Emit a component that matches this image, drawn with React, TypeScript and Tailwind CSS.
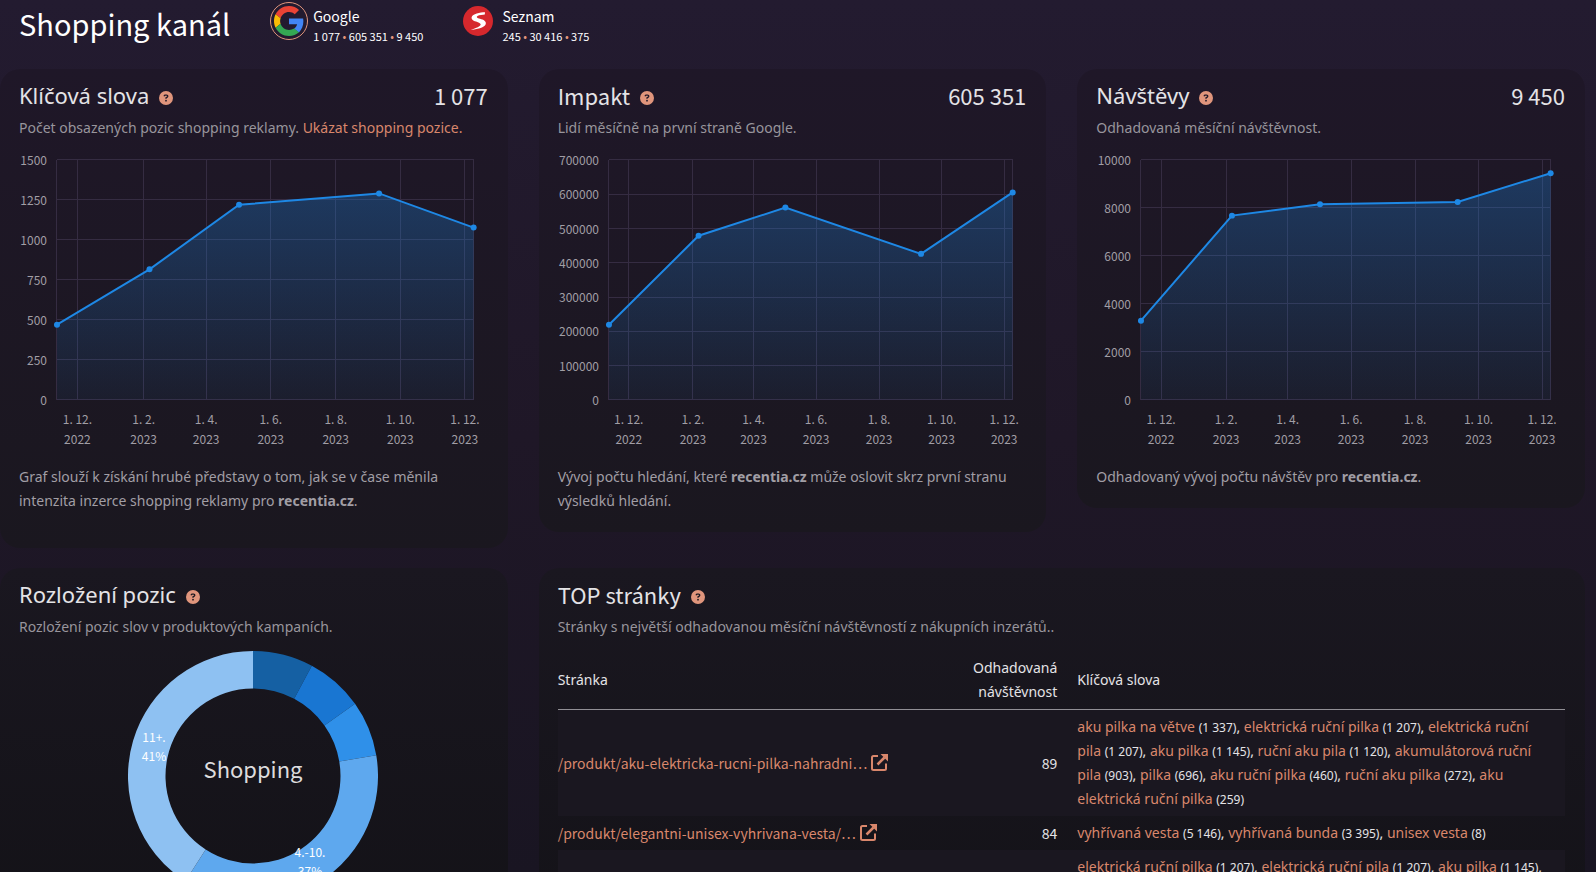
import React from 'react';
import { FaCircleQuestion } from 'react-icons/fa6';

// "Noto Sans CJK JP" has no precomposed č/ř/ž/š, so it is only used for strings without them
const LATIN = 'font-["Noto_Sans_CJK_JP","Noto_Sans",sans-serif]';
const LINK = 'text-[#d9876c] hover:underline';

// position of the dates on the time axis, 0 - 1
const TICKS = [
  { at: 0.049, day: '1. 12.', year: '2022' },
  { at: 0.208, day: '1. 2.', year: '2023' },
  { at: 0.358, day: '1. 4.', year: '2023' },
  { at: 0.513, day: '1. 6.', year: '2023' },
  { at: 0.669, day: '1. 8.', year: '2023' },
  { at: 0.824, day: '1. 10.', year: '2023' },
  { at: 0.979, day: '1. 12.', year: '2023' },
];
const DATES = [0, 0.222, 0.437, 0.773, 1];

type ChartProps = {
  id: string;
  label: string;
  left: number;
  max: number;
  step: number;
  values: number[];
};

function AreaChart({ id, label, left, max, step, values }: ChartProps) {
  const right = 455;
  const top = 12;
  const bottom = 252;
  const x = (t: number) => left + t * (right - left);
  const y = (v: number) => bottom - (v / max) * (bottom - top);
  const line = values.map((v, i) => `${x(DATES[i])},${y(v)}`).join(' ');

  const rows: number[] = [];
  for (let v = 0; v <= max; v += step) rows.push(v);

  return (
    <svg viewBox="0 0 469 300" className="mt-2 block h-auto w-full overflow-visible" role="img" aria-label={label}>
      <defs>
        <linearGradient id={id} x1="0" y1="0" x2="0" y2="1">
          <stop offset="0" stopColor="#1e88e5" stopOpacity="0.3" />
          <stop offset="1" stopColor="#1e88e5" stopOpacity="0.06" />
        </linearGradient>
      </defs>
      <g stroke="#352c42" shapeRendering="crispEdges">
        {rows.map((v) => (
          <line key={v} x1={left} x2={right} y1={y(v)} y2={y(v)} />
        ))}
        {TICKS.map((t) => (
          <line key={t.at} x1={x(t.at)} x2={x(t.at)} y1={top} y2={bottom} />
        ))}
        <line x1={left} x2={left} y1={top} y2={bottom} />
        <line x1={right} x2={right} y1={top} y2={bottom} />
      </g>
      <polygon points={`${left},${bottom} ${line} ${right},${bottom}`} fill={`url(#${id})`} />
      <polyline points={line} fill="none" stroke="#1e88e5" strokeWidth="2" />
      {values.map((v, i) => (
        <circle key={i} cx={x(DATES[i])} cy={y(v)} r="3" fill="#1e88e5" />
      ))}
      <g className={`${LATIN} fill-[#a19ea5] text-xs`}>
        {rows.map((v) => (
          <text key={v} x={left - 10} y={y(v) + 5} textAnchor="end">
            {v}
          </text>
        ))}
        {TICKS.map((t) => (
          <g key={t.at} textAnchor="middle">
            <text x={x(t.at)} y="276">
              {t.day}
            </text>
            <text x={x(t.at)} y="296">
              {t.year}
            </text>
          </g>
        ))}
      </g>
    </svg>
  );
}

const SLICES = [
  { from: 0, to: 0.078, color: '#1560a3' },
  { from: 0.078, to: 0.152, color: '#1976d2' },
  { from: 0.152, to: 0.2235, color: '#2f90e9' },
  { from: 0.2235, to: 0.591, color: '#5ea8ee' },
  { from: 0.591, to: 1, color: '#8ec1f2' },
];

function Donut() {
  const at = (t: number, r: number) =>
    `${125 + r * Math.sin(t * 2 * Math.PI)} ${125 - r * Math.cos(t * 2 * Math.PI)}`;

  return (
    <svg viewBox="0 0 250 250" className="mx-auto mt-3 block w-[250px]" role="img" aria-label="Rozložení pozic">
      {SLICES.map((s) => (
        <path
          key={s.from}
          fill={s.color}
          d={`M${at(s.from, 125)}A125 125 0 0 1 ${at(s.to, 125)}L${at(s.to, 87.5)}A87.5 87.5 0 0 0 ${at(s.from, 87.5)}Z`}
        />
      ))}
      <g className={`${LATIN} fill-white text-xs`} textAnchor="middle">
        <text x="26" y="91">11+.</text>
        <text x="26" y="110">41%</text>
        <text x="182" y="206">4.-10.</text>
        <text x="182" y="225">37%</text>
      </g>
      <text x="125" y="127" textAnchor="middle" className={`${LATIN} fill-[#dddcde] text-[22px]`}>
        Shopping
      </text>
    </svg>
  );
}

type CardProps = {
  title: string;
  latin?: boolean;
  value?: string;
  intro: React.ReactNode;
  className: string;
  children: React.ReactNode;
};

function Card({ title, latin, value, intro, className, children }: CardProps) {
  return (
    <section className={`min-w-0 rounded-[20px] bg-linear-to-b pt-[11px] pr-5 pl-[19px] ${className}`}>
      <header className="mb-1 flex h-8 items-center justify-between text-[22px] text-[#e4e3e6]">
        <div className="flex items-center gap-[10px]">
          <h2 className={latin ? LATIN : ''}>{title}</h2>
          <button type="button" aria-label="Nápověda" className="pt-1 text-sm text-[#e0957c]">
            <FaCircleQuestion />
          </button>
        </div>
        {value && <span className={LATIN}>{value}</span>}
      </header>
      <p className="leading-6 text-[#98959c]">{intro}</p>
      {children}
    </section>
  );
}

function GoogleLogo() {
  return (
    <svg viewBox="0 0 48 48" className="size-[30px]">
      <path fill="#EA4335" d="M24 9.5c3.54 0 6.71 1.22 9.21 3.6l6.85-6.85C35.9 2.38 30.47 0 24 0 14.62 0 6.51 5.38 2.56 13.22l7.98 6.19C12.43 13.72 17.74 9.5 24 9.5z" />
      <path fill="#4285F4" d="M46.98 24.55c0-1.57-.15-3.09-.38-4.55H24v9.02h12.94c-.58 2.96-2.26 5.48-4.78 7.18l7.73 6c4.51-4.18 7.09-10.36 7.09-17.65z" />
      <path fill="#FBBC05" d="M10.53 28.59c-.48-1.45-.76-2.99-.76-4.59s.27-3.14.76-4.59l-7.98-6.19C.92 16.46 0 20.12 0 24c0 3.88.92 7.54 2.56 10.78l7.97-6.19z" />
      <path fill="#34A853" d="M24 48c6.48 0 11.93-2.13 15.89-5.81l-7.73-6c-2.15 1.45-4.92 2.3-8.16 2.3-6.26 0-11.57-4.22-13.47-9.91l-7.98 6.19C6.51 42.62 14.62 48 24 48z" />
    </svg>
  );
}

function SeznamLogo() {
  return (
    <svg viewBox="0 0 30 30" className="size-[30px]">
      <circle cx="15" cy="15" r="15" fill="#d6282d" />
      <path
        fill="#fff"
        d="M22 6.200C17 6.400 9.500 7.600 8.600 11.200C8 14.500 12.500 15.200 15.500 16.400C18.300 17.600 18.200 19 16.300 20.200C14.500 21.400 11.500 22.600 7.800 24C13.500 23.300 21.500 21.800 22.700 18.300C23.700 15.200 20.500 13.800 17 12.800C13.800 11.900 13 11.200 14.500 10C16.200 8.800 20 8.600 21.800 8.400Z"
      />
    </svg>
  );
}

function ExternalIcon() {
  return (
    <svg viewBox="0 0 17 17" className="size-[17px] shrink-0" fill="none" stroke="currentColor" strokeWidth="2">
      <path d="M7 2H2.500C1.700 2 1 2.700 1 3.500V14.500C1 15.300 1.700 16 2.500 16H13.500C14.300 16 15 15.300 15 14.500V9.500" />
      <path d="M6.500 10.500L13.500 3.500" strokeWidth="2.500" />
      <path d="M9.500 0H17V7.500Z" fill="currentColor" stroke="none" />
    </svg>
  );
}

type EngineProps = { name: string; stats: string[]; logo: React.ReactNode };

function Engine({ name, stats, logo }: EngineProps) {
  return (
    <button type="button" className={`flex items-start gap-[5px] text-left text-white ${LATIN}`}>
      {logo}
      <span className="flex flex-col pt-1">
        <span className="text-sm leading-6">{name}</span>
        <span className="text-[11px] leading-4">
          {stats.map((s, i) => (
            <React.Fragment key={s}>
              {i > 0 && <span className="text-[#e0957c]"> • </span>}
              {s}
            </React.Fragment>
          ))}
        </span>
      </span>
    </button>
  );
}

const PAGES = [
  {
    url: '/produkt/aku-elektricka-rucni-pilka-nahradni…',
    visits: 89,
    words: [
      ['aku pilka na větve', '1 337'],
      ['elektrická ruční pilka', '1 207'],
      ['elektrická ruční pila', '1 207'],
      ['aku pilka', '1 145'],
      ['ruční aku pila', '1 120'],
      ['akumulátorová ruční pila', '903'],
      ['pilka', '696'],
      ['aku ruční pilka', '460'],
      ['ruční aku pilka', '272'],
      ['aku elektrická ruční pilka', '259'],
    ],
  },
  {
    url: '/produkt/elegantni-unisex-vyhrivana-vesta/…',
    visits: 84,
    words: [
      ['vyhřívaná vesta', '5 146'],
      ['vyhřívaná bunda', '3 395'],
      ['unisex vesta', '8'],
    ],
  },
  {
    url: '/produkt/elektricka-rucni-pilka-aku…',
    visits: 71,
    words: [
      ['elektrická ruční pilka', '1 207'],
      ['elektrická ruční pila', '1 207'],
      ['aku pilka', '1 145'],
      ['ruční aku pila', '1 120'],
      ['akumulátorová ruční pila', '903'],
      ['pilka', '696'],
      ['aku ruční pilka', '460'],
    ],
  },
];

function PagesTable() {
  return (
    <table className="mt-3 w-full table-fixed leading-6 text-[#e4e3e6]">
      <colgroup>
        <col className="w-[39%]" />
        <col className="w-[11.6%]" />
        <col />
      </colgroup>
      <thead>
        <tr className="border-b border-[#918f95]">
          <th className="py-[5px] text-left font-normal">Stránka</th>
          <th className="px-[10px] py-[5px] text-right font-normal">Odhadovaná návštěvnost</th>
          <th className="px-[10px] py-[5px] text-left font-normal">Klíčová slova</th>
        </tr>
      </thead>
      <tbody>
        {PAGES.map((page) => (
          <tr key={page.url} className="odd:bg-[#1a1720]">
            <td className={`py-[5px] ${LATIN}`}>
              <a href="#" className={`flex items-center gap-1 ${LINK}`}>
                {page.url}
                <ExternalIcon />
              </a>
            </td>
            <td className={`px-[10px] py-[5px] text-right ${LATIN}`}>{page.visits}</td>
            <td className="px-[10px] py-[5px]">
              {page.words.map(([word, count], i) => (
                <React.Fragment key={word}>
                  {i > 0 && ', '}
                  <a href="#" className={LINK}>
                    {word}
                  </a>{' '}
                  <span className="text-xs whitespace-nowrap">({count})</span>
                </React.Fragment>
              ))}
            </td>
          </tr>
        ))}
      </tbody>
    </table>
  );
}

export default function App() {
  return (
    <div className='h-screen overflow-hidden bg-linear-to-b from-[#231b30] via-[#1f1727] to-[#191522] font-["Noto_Sans",sans-serif] text-sm'>
      {/* Channel switcher */}
      <div className="flex h-[69px] items-start pl-[19px]">
        <h1 className={`text-[29px] leading-[46px] text-white ${LATIN}`}>Shopping kanál</h1>
        <div className="ml-10 flex gap-9">
          <Engine
            name="Google"
            stats={['1 077', '605 351', '9 450']}
            logo={
              <span className="mt-[2px] flex size-[38px] items-center justify-center rounded-full border border-[#e0957c]">
                <GoogleLogo />
              </span>
            }
          />
          <Engine
            name="Seznam"
            stats={['245', '30 416', '375']}
            logo={
              <span className="mt-[2px] flex size-[38px] items-center justify-center">
                <SeznamLogo />
              </span>
            }
          />
        </div>
      </div>

      <div className="grid grid-cols-3 items-start gap-x-[31px] gap-y-5 pr-[11px]">
        <Card
          title="Klíčová slova"
          value="1 077"
          className="from-[#1f1728] to-[#1a171f] pb-[35px]"
          intro={
            <>
              Počet obsazených pozic shopping reklamy.{' '}
              <a href="#" className={LINK}>
                Ukázat shopping pozice.
              </a>
            </>
          }
        >
          <AreaChart id="words" label="Vývoj klíčových slov" left={38} max={1500} step={250} values={[470, 816, 1220, 1291, 1077]} />
          <p className="mt-[17px] leading-6 text-[#a19ea5]">
            Graf slouží k získání hrubé představy o tom, jak se v čase měnila intenzita inzerce shopping reklamy pro{' '}
            <strong>recentia.cz</strong>.
          </p>
        </Card>

        <Card
          title="Impakt"
          latin
          value="605 351"
          className="from-[#1f1728] to-[#1a171f] pb-[19px]"
          intro="Lidí měsíčně na první straně Google."
        >
          <AreaChart id="impact" label="Vývoj impaktu" left={51} max={700000} step={100000} values={[219000, 479000, 561000, 426000, 605351]} />
          <p className="mt-[17px] leading-6 text-[#a19ea5]">
            Vývoj počtu hledání, které <strong>recentia.cz</strong> může oslovit skrz první stranu výsledků hledání.
          </p>
        </Card>

        <Card
          title="Návštěvy"
          value="9 450"
          className="from-[#1f1728] to-[#1a171f] pb-[19px]"
          intro="Odhadovaná měsíční návštěvnost."
        >
          <AreaChart id="visits" label="Vývoj návštěv" left={45} max={10000} step={2000} values={[3300, 7680, 8150, 8250, 9450]} />
          <p className="mt-[17px] leading-6 text-[#a19ea5]">
            Odhadovaný vývoj počtu návštěv pro <strong>recentia.cz</strong>.
          </p>
        </Card>

        <Card
          title="Rozložení pozic"
          className="from-[#1a1720] to-[#131217] pb-10"
          intro="Rozložení pozic slov v produktových kampaních."
        >
          <Donut />
        </Card>

        <Card
          title="TOP stránky"
          latin
          className="col-span-2 from-[#1a1720] to-[#131217] pb-10"
          intro="Stránky s největší odhadovanou měsíční návštěvností z nákupních inzerátů.."
        >
          <PagesTable />
        </Card>
      </div>
    </div>
  );
}
